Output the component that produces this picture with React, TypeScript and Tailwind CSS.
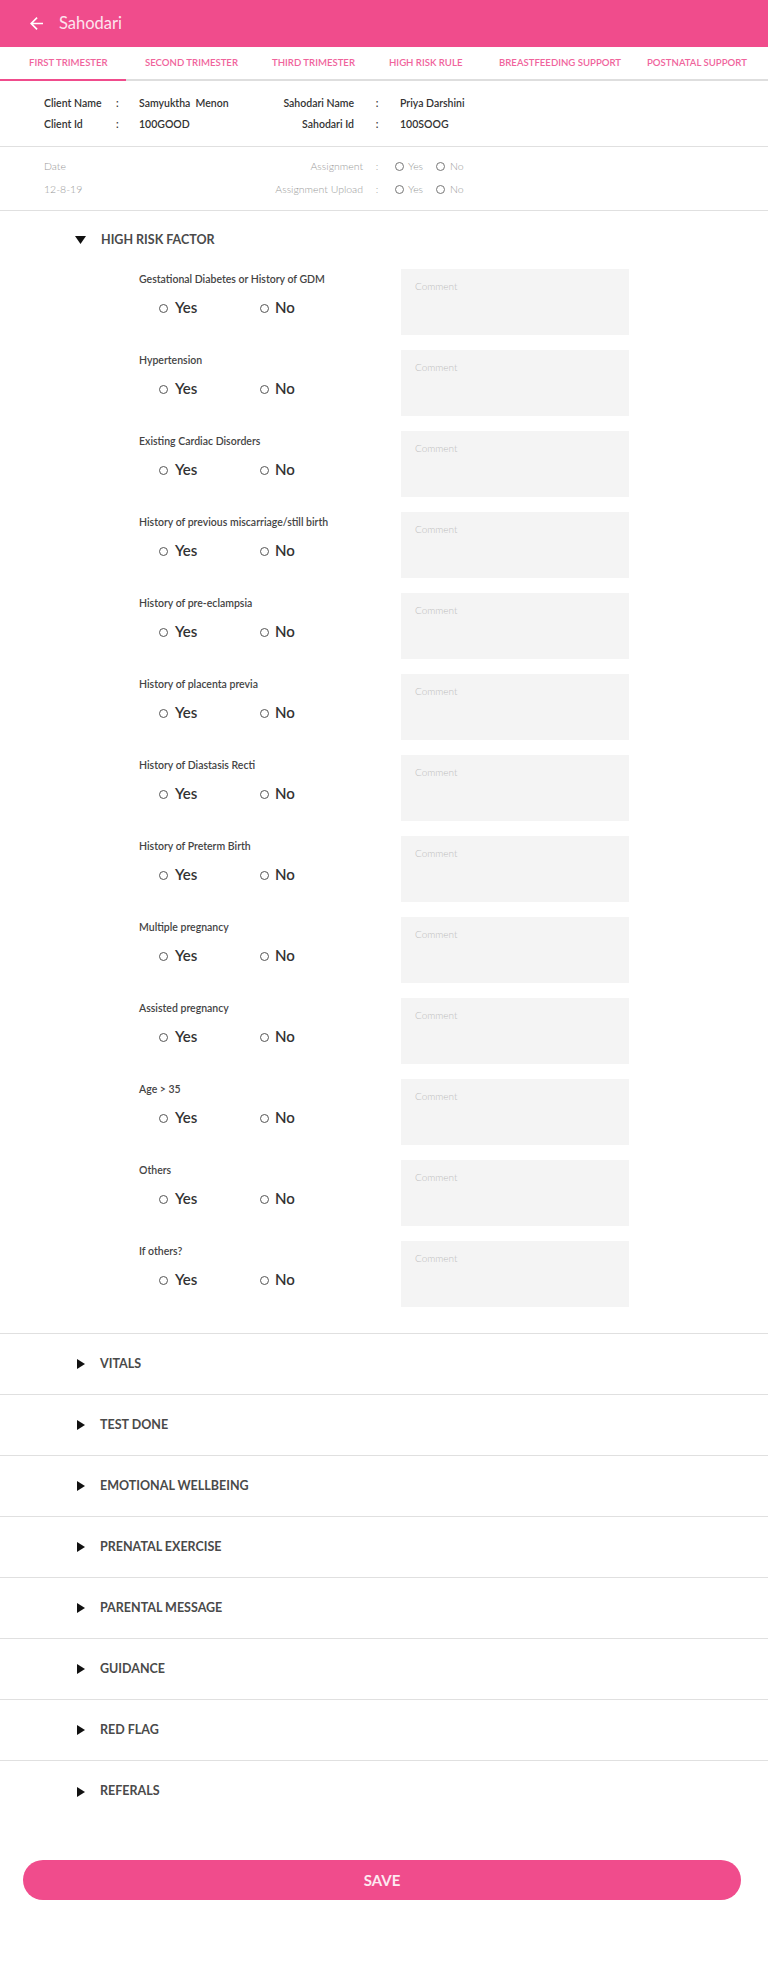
import React from "react";

const tabs = [
    { label: "FIRST TRIMESTER", w: "w-[116px]" },
    { label: "SECOND TRIMESTER", w: "w-[127px]" },
    { label: "THIRD TRIMESTER", w: "w-[117px]" },
    { label: "HIGH RISK RULE", w: "w-[110px]" },
    { label: "BREASTFEEDING SUPPORT", w: "w-[148px]" },
    { label: "POSTNATAL SUPPORT", w: "w-[110px]" },
];

const questions = [
    "Gestational Diabetes or History of GDM",
    "Hypertension",
    "Existing Cardiac Disorders",
    "History of previous miscarriage/still birth",
    "History of pre-eclampsia",
    "History of placenta previa",
    "History of Diastasis Recti",
    "History of Preterm Birth",
    "Multiple pregnancy",
    "Assisted pregnancy",
    "Age > 35",
    "Others",
    "If others?",
];

const sections = [
    "VITALS",
    "TEST DONE",
    "EMOTIONAL WELLBEING",
    "PRENATAL EXERCISE",
    "PARENTAL MESSAGE",
    "GUIDANCE",
    "RED FLAG",
    "REFERALS",
];

const TriangleDown = () => (
    <svg width="11" height="8" viewBox="0 0 11 8" className="shrink-0">
        <polygon points="0,0 11,0 5.5,8" fill="#111" />
    </svg>
);

const TriangleRight = () => (
    <svg width="8" height="10" viewBox="0 0 8 10" className="shrink-0">
        <polygon points="0,0 8,5 0,10" fill="#111" />
    </svg>
);

const SmallRadios = () => (
    <div className="flex items-center ml-[4px]">
        <span className="w-[9px] h-[9px] rounded-full border border-[#777]" />
        <span className="ml-[4px] w-[28px]">Yes</span>
        <span className="w-[9px] h-[9px] rounded-full border border-[#777]" />
        <span className="ml-[5px]">No</span>
    </div>
);

const QuestionRow = ({ label, last }: { label: string; last: boolean }) => (
    <div className={"flex " + (last ? "" : "mb-[15px]")}>
        <div className="w-[401px] pl-[139px]">
            <div className="pt-[3px] text-[10.5px] leading-[14px] font-semibold text-[#444]">{label}</div>
            <div className="mt-[11px] h-[20px] flex items-center pl-[20px] text-[15px] font-semibold text-[#333]">
                <span className="w-[9px] h-[9px] rounded-full border border-[#555] mt-[2px]" />
                <span className="ml-[7px] w-[85px]">Yes</span>
                <span className="w-[9px] h-[9px] rounded-full border border-[#555] mt-[2px]" />
                <span className="ml-[6px]">No</span>
            </div>
        </div>
        <div className="w-[228px] h-[66px] bg-[#f4f4f4] pl-[14px] pt-[10px] text-[10px] leading-[14px] font-light text-[#bdbdbd]">
            Comment
        </div>
    </div>
);

export default function App() {
    return (
        <div className="w-[768px] min-h-[1961px] bg-white font-['Lato','Liberation_Sans',sans-serif]">
            {/* app bar */}
            <div className="h-[47px] bg-[#f04c8c] flex items-center pl-[30px]">
                <svg width="13" height="13" viewBox="4 4 16 16" fill="#fff">
                    <path d="M20 11H7.83l5.59-5.59L12 4l-8 8 8 8 1.41-1.41L7.83 13H20v-2z" />
                </svg>
                <span className="ml-[16px] text-[16.5px] text-[#fde4ee]">Sahodari</span>
            </div>

            {/* tabs */}
            <div className="h-[32px] flex items-center pl-[29px] text-[9.6px] font-semibold text-[#f0649c]">
                {tabs.map((t) => (
                    <span key={t.label} className={t.w + " shrink-0 whitespace-nowrap"}>
                        {t.label}
                    </span>
                ))}
            </div>
            <div className="h-[2px] bg-[#dedede]">
                <div className="h-[2px] w-[126px] bg-[#f04c8c]" />
            </div>

            {/* client info */}
            <div className="h-[66px] border-b border-[#e0e0e0] pt-[12px] text-[10.5px] font-semibold text-[#333]">
                <div className="h-[21px] flex items-center pl-[44px]">
                    <span className="w-[72px]">Client Name</span>
                    <span className="w-[23px]">:</span>
                    <span className="w-[125px]">Samyuktha&nbsp; Menon</span>
                    <span className="w-[90px] text-right">Sahodari Name</span>
                    <span className="w-[46px] text-center">:</span>
                    <span>Priya Darshini</span>
                </div>
                <div className="h-[21px] flex items-center pl-[44px]">
                    <span className="w-[72px]">Client Id</span>
                    <span className="w-[23px]">:</span>
                    <span className="w-[125px]">100GOOD</span>
                    <span className="w-[90px] text-right">Sahodari Id</span>
                    <span className="w-[46px] text-center">:</span>
                    <span>100SOOG</span>
                </div>
            </div>

            {/* date / assignment */}
            <div className="h-[64px] border-b border-[#e0e0e0] pt-[8px] text-[10.5px] font-light text-[#999]">
                <div className="h-[23px] flex items-center pl-[44px]">
                    <span className="w-[200px]">Date</span>
                    <span className="w-[119px] text-right">Assignment</span>
                    <span className="w-[28px] text-center">:</span>
                    <SmallRadios />
                </div>
                <div className="h-[23px] flex items-center pl-[44px]">
                    <span className="w-[200px]">12-8-19</span>
                    <span className="w-[119px] text-right">Assignment Upload</span>
                    <span className="w-[28px] text-center">:</span>
                    <SmallRadios />
                </div>
            </div>

            {/* high risk factor */}
            <div className="border-b border-[#e0e0e0] pb-[26px]">
                <div className="h-[58px] flex items-center pl-[75px]">
                    <TriangleDown />
                    <span className="ml-[15px] text-[12.5px] font-bold text-[#4a4a4a]">HIGH RISK FACTOR</span>
                </div>
                {questions.map((q, i) => (
                    <QuestionRow key={q} label={q} last={i === questions.length - 1} />
                ))}
            </div>

            {/* collapsed sections */}
            {sections.map((s, i) => (
                <div
                    key={s}
                    className={
                        "h-[61px] flex items-center pl-[77px] " +
                        (i === sections.length - 1 ? "" : "border-b border-[#e0e0e0]")
                    }
                >
                    <TriangleRight />
                    <span className="ml-[15px] text-[12.5px] font-bold text-[#4a4a4a]">{s}</span>
                </div>
            ))}

            <div className="pl-[23px] pr-[27px] pt-[38px] pb-[61px]">
                <button className="w-full h-[40px] rounded-full bg-[#f04c8c] text-[15px] font-bold text-[#fde9f1]">
                    SAVE
                </button>
            </div>
        </div>
    );
}
